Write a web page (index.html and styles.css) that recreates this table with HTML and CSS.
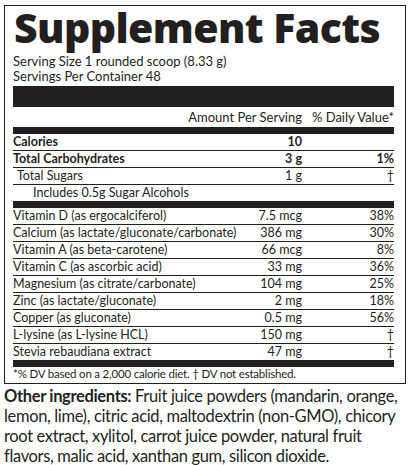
FILE: index.html
```html
<!DOCTYPE html>
<html lang="en">
<head>
    <meta charset="UTF-8">
    <meta name="viewport" content="width=device-width, initial-scale=1.0">
    <title>Supplement Facts</title>
    <link rel="stylesheet" href="styles.css">
</head>
<body>
    <div class="label">
        <h1 class="label-title">Supplement Facts</h1>
        <p class="serving">Serving Size 1 rounded scoop (8.33 g)<br>Servings Per Container 48</p>

        <div class="bar bar-thick"></div>
        <div class="row row-head">
            <span class="head-amount">Amount Per Serving</span>
            <span class="dv">% Daily Value*</span>
        </div>
        <div class="bar bar-thin"></div>

        <div class="row lined bold">
            <span>Calories</span>
            <span class="amount">10</span>
            <span class="dv"></span>
        </div>
        <div class="row lined bold">
            <span>Total Carbohydrates</span>
            <span class="amount">3 g</span>
            <span class="dv">1%</span>
        </div>
        <div class="row lined">
            <span class="indent-1">Total Sugars</span>
            <span class="amount">1 g</span>
            <span class="dv">&dagger;</span>
        </div>
        <div class="row">
            <span class="indent-2">Includes 0.5g Sugar Alcohols</span>
            <span class="amount"></span>
            <span class="dv"></span>
        </div>

        <div class="bar bar-thin"></div>

        <div class="row lined">
            <span>Vitamin D (as ergocalciferol)</span>
            <span class="amount">7.5 mcg</span>
            <span class="dv">38%</span>
        </div>
        <div class="row lined">
            <span>Calcium (as lactate/gluconate/carbonate)</span>
            <span class="amount">386 mg</span>
            <span class="dv">30%</span>
        </div>
        <div class="row lined">
            <span>Vitamin A (as beta-carotene)</span>
            <span class="amount">66 mcg</span>
            <span class="dv">8%</span>
        </div>
        <div class="row lined">
            <span>Vitamin C (as ascorbic acid)</span>
            <span class="amount">33 mg</span>
            <span class="dv">36%</span>
        </div>
        <div class="row lined">
            <span>Magnesium (as citrate/carbonate)</span>
            <span class="amount">104 mg</span>
            <span class="dv">25%</span>
        </div>
        <div class="row lined">
            <span>Zinc (as lactate/gluconate)</span>
            <span class="amount">2 mg</span>
            <span class="dv">18%</span>
        </div>
        <div class="row lined">
            <span>Copper (as gluconate)</span>
            <span class="amount">0.5 mg</span>
            <span class="dv">56%</span>
        </div>
        <div class="row lined">
            <span>L-lysine (as L-lysine HCL)</span>
            <span class="amount">150 mg</span>
            <span class="dv">&dagger;</span>
        </div>
        <div class="row">
            <span>Stevia rebaudiana extract</span>
            <span class="amount">47 mg</span>
            <span class="dv">&dagger;</span>
        </div>

        <div class="bar bar-thin"></div>
        <p class="footnote">*% DV based on a 2,000 calorie diet. &dagger; DV not established.</p>
    </div>

    <p class="ingredients"><strong>Other ingredients:</strong> Fruit juice powders (mandarin, orange,<br>lemon, lime), citric acid, maltodextrin (non-GMO), chicory<br>root extract, xylitol, carrot juice powder, natural fruit<br>flavors, malic acid, xanthan gum, silicon dioxide.</p>
</body>
</html>
```

FILE: styles.css
```css
/* Base */
body {
    margin: 0;
    background-color: #fff;
    color: #231f20;
    font-family: Lato, 'Open Sans', Arial, sans-serif;
}

/* Label box */
.label {
    width: 381px;
    margin: 5px 0 0 4px;
    padding: 0 11px 2px 8px;
    border: 1px solid #231f20;
}

.label-title {
    margin: 0 0 6px 1px;
    font-family: 'Open Sans', sans-serif;
    font-size: 41px;
    font-weight: 800;
    line-height: 42px;
    letter-spacing: -0.6px;
    white-space: nowrap;
}

.serving {
    margin: 0 0 2px;
    font-size: 13px;
    line-height: 15px;
}

.bar {
    background-color: #231f20;
}

.bar-thick {
    height: 21px;
}

.bar-thin {
    height: 7px;
}

/* Rows */
.row {
    display: grid;
    grid-template-columns: minmax(0, 1fr) 90px 92px;
    font-size: 12.5px;
    line-height: 16px;
    white-space: nowrap;
}

.row-head {
    height: 20px;
    font-size: 13px;
    line-height: 20px;
}

.head-amount {
    grid-column: 1 / 3;
    text-align: right;
}

.row.lined {
    border-bottom: 1px solid #231f20;
}

.row.bold {
    font-weight: 700;
}

.amount,
.dv {
    text-align: right;
}

.indent-1 {
    padding-left: 4px;
}

.indent-2 {
    padding-left: 20px;
}

.footnote {
    margin: 0;
    font-size: 11.5px;
    line-height: 14px;
    letter-spacing: -0.2px;
}

/* Ingredients */
.ingredients {
    margin: 2px 0 0 4px;
    font-size: 16.5px;
    line-height: 20px;
    letter-spacing: -0.35px;
    white-space: nowrap;
}
```
